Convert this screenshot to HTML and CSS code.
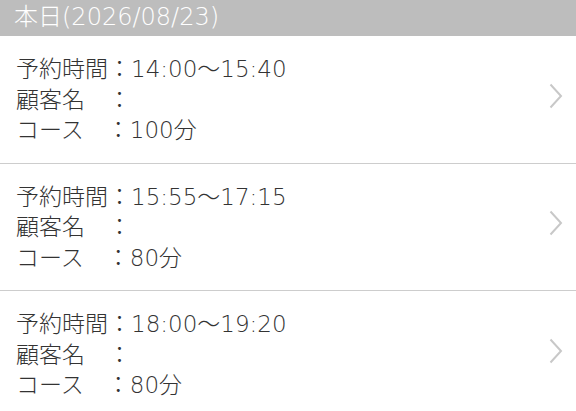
FILE: index.html
```html
<!DOCTYPE html>
<html lang="ja">
<head>
  <meta charset="UTF-8" />
  <title>本日の予約</title>
  <link rel="stylesheet" href="styles.css">
</head>
<body>
  <!-- 日付ヘッダー -->
  <div class="day-header">本日(2026/08/23)</div>

  <ul class="reserve-list">
    <li class="reserve-item">
      <div class="reserve-info">
        <p>予約時間：14:00〜15:40</p>
        <p>顧客名　：</p>
        <p>コース　：100分</p>
      </div>
      <svg class="chevron" width="14" height="26" viewBox="0 0 14 26"><path d="M1.5 1.5 L12 13 L1.5 24.5" /></svg>
    </li>
    <li class="reserve-item">
      <div class="reserve-info">
        <p>予約時間：15:55〜17:15</p>
        <p>顧客名　：</p>
        <p>コース　：80分</p>
      </div>
      <svg class="chevron" width="14" height="26" viewBox="0 0 14 26"><path d="M1.5 1.5 L12 13 L1.5 24.5" /></svg>
    </li>
    <li class="reserve-item">
      <div class="reserve-info">
        <p>予約時間：18:00〜19:20</p>
        <p>顧客名　：</p>
        <p>コース　：80分</p>
      </div>
      <svg class="chevron" width="14" height="26" viewBox="0 0 14 26"><path d="M1.5 1.5 L12 13 L1.5 24.5" /></svg>
    </li>
  </ul>
</body>
</html>
```

FILE: styles.css
```css
html, body {
  margin: 0;
  padding: 0;
  background: #ffffff;
  font-family: "DejaVu Sans", "Noto Sans CJK JP", sans-serif;
  color: #333333;
}

.day-header {
  height: 36px;
  line-height: 35px;
  padding-left: 14px;
  background: #bdbdbd;
  color: #ffffff;
  font-size: 24px;
  font-weight: 300;
}

.reserve-list {
  list-style: none;
  margin: 0;
  padding: 0;
}

.reserve-item {
  display: flex;
  align-items: center;
  justify-content: space-between;
  padding: 18px 13px 17px 16px;
  border-bottom: 1.5px solid #cdcdcd;
}

.reserve-info {
  line-height: 30.5px;
}

.reserve-info p {
  margin: 0;
  height: 30.5px;
  font-size: 23px;
  font-weight: 300;
}

.chevron {
  margin-top: -8px;
  fill: none;
  stroke: #c8c8c8;
  stroke-width: 2;
}
```
